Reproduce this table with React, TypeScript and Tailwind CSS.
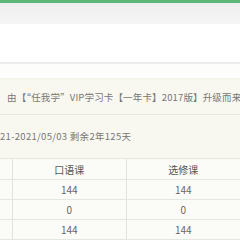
const rows = [
  ["144", "144"],
  ["0", "0"],
  ["144", "144"],
];

export default function App() {
  return (
    <div className="w-[240px] h-[240px] overflow-hidden bg-white font-['Noto_Sans_CJK_SC',sans-serif]">
      {/* top bar */}
      <div className="h-[3px] bg-[#5cb878]" />
      <div className="h-[21px] bg-gradient-to-b from-[#eeeeee] to-[#f6f6f6]" />
      <div className="h-[38px] bg-white" />
      <div className="h-[2px] bg-[#ececec]" />
      <div className="h-[14px] bg-[#fdfdfb]" />
      <div className="h-[2px] bg-[#f4f5e9]" />

      {/* card info */}
      <div className="bg-[#f9f8f0] text-[9.5px] text-[#777] whitespace-nowrap">
        <div className="h-[35px] flex items-center pl-[7px] tracking-[0.15px] border-b border-[#ebe9df]">
          由【“任我学”VIP学习卡【一年卡】2017版】升级而来
        </div>
        <div className="h-[43px] flex items-center tracking-[0.3px]">21-2021/05/03 剩余2年125天</div>
      </div>

      {/* table */}
      <div className="bg-[#fbfcf7] text-[#666] whitespace-nowrap">
        <div className="flex h-[22px] border-t border-b border-[#e4e7df] text-[10px] text-[#555]">
          <div className="w-[14px] border-r border-[#dfe3da]" />
          <div className="w-[123px] flex items-center justify-center border-r border-[#dfe3da]">口语课</div>
          <div className="w-[123px] flex items-center justify-center">选修课</div>
        </div>
        {rows.map((r, i) => (
          <div key={i} className="flex h-[20px] border-b border-[#e4e7df] text-[10px]">
            <div className="w-[14px] border-r border-[#dfe3da]" />
            <div className="w-[123px] flex items-center justify-center border-r border-[#dfe3da]">{r[0]}</div>
            <div className="w-[123px] flex items-center justify-center">{r[1]}</div>
          </div>
        ))}
      </div>
    </div>
  );
}
